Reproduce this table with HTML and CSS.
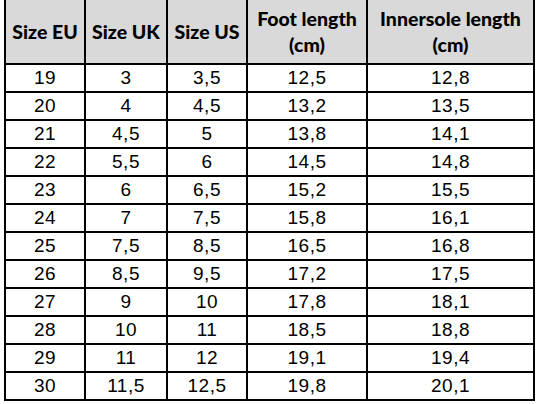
FILE: index.html
```html
<!DOCTYPE html>
<html>
<head>
<meta charset="utf-8">
<link rel="stylesheet" href="styles.css">
</head>
<body>
<table class="sizes">
  <colgroup>
    <col class="c1"><col class="c2"><col class="c3"><col class="c4"><col class="c5">
  </colgroup>
  <thead>
    <tr>
      <th>Size EU</th>
      <th>Size UK</th>
      <th>Size US</th>
      <th>Foot length<br>(cm)</th>
      <th>Innersole length<br>(cm)</th>
    </tr>
  </thead>
  <tbody>
    <tr><td>19</td><td>3</td><td>3,5</td><td>12,5</td><td>12,8</td></tr>
    <tr><td>20</td><td>4</td><td>4,5</td><td>13,2</td><td>13,5</td></tr>
    <tr><td>21</td><td>4,5</td><td>5</td><td>13,8</td><td>14,1</td></tr>
    <tr><td>22</td><td>5,5</td><td>6</td><td>14,5</td><td>14,8</td></tr>
    <tr><td>23</td><td>6</td><td>6,5</td><td>15,2</td><td>15,5</td></tr>
    <tr><td>24</td><td>7</td><td>7,5</td><td>15,8</td><td>16,1</td></tr>
    <tr><td>25</td><td>7,5</td><td>8,5</td><td>16,5</td><td>16,8</td></tr>
    <tr><td>26</td><td>8,5</td><td>9,5</td><td>17,2</td><td>17,5</td></tr>
    <tr><td>27</td><td>9</td><td>10</td><td>17,8</td><td>18,1</td></tr>
    <tr><td>28</td><td>10</td><td>11</td><td>18,5</td><td>18,8</td></tr>
    <tr><td>29</td><td>11</td><td>12</td><td>19,1</td><td>19,4</td></tr>
    <tr><td>30</td><td>11,5</td><td>12,5</td><td>19,8</td><td>20,1</td></tr>
  </tbody>
</table>
</body>
</html>
```
FILE: styles.css
```css
html, body {
  margin: 0;
  padding: 0;
  background: #ffffff;
}

.sizes {
  margin-left: 4px;
  border-collapse: separate;
  border-spacing: 0;
  table-layout: fixed;
  width: 531px;
  border-left: 2px solid #000;
}

.c1 { width: 80px; }
.c2 { width: 82px; }
.c3 { width: 80px; }
.c4 { width: 120px; }
.c5 { width: 167px; }

.sizes th,
.sizes td {
  padding: 0;
  text-align: center;
  border-right: 2px solid #000;
  border-bottom: 2px solid #000;
  color: #000;
}

.sizes th {
  height: 63px;
  background: #d9d9d9;
  font-family: "Lato", "Open Sans", sans-serif;
  font-weight: 900;
  font-size: 19.5px;
  line-height: 26px;
  white-space: nowrap;
}

.sizes td {
  height: 26px;
  font-family: "Liberation Sans", Arial, sans-serif;
  font-size: 19px;
  line-height: 26px;
  letter-spacing: 0.5px;
}
```
